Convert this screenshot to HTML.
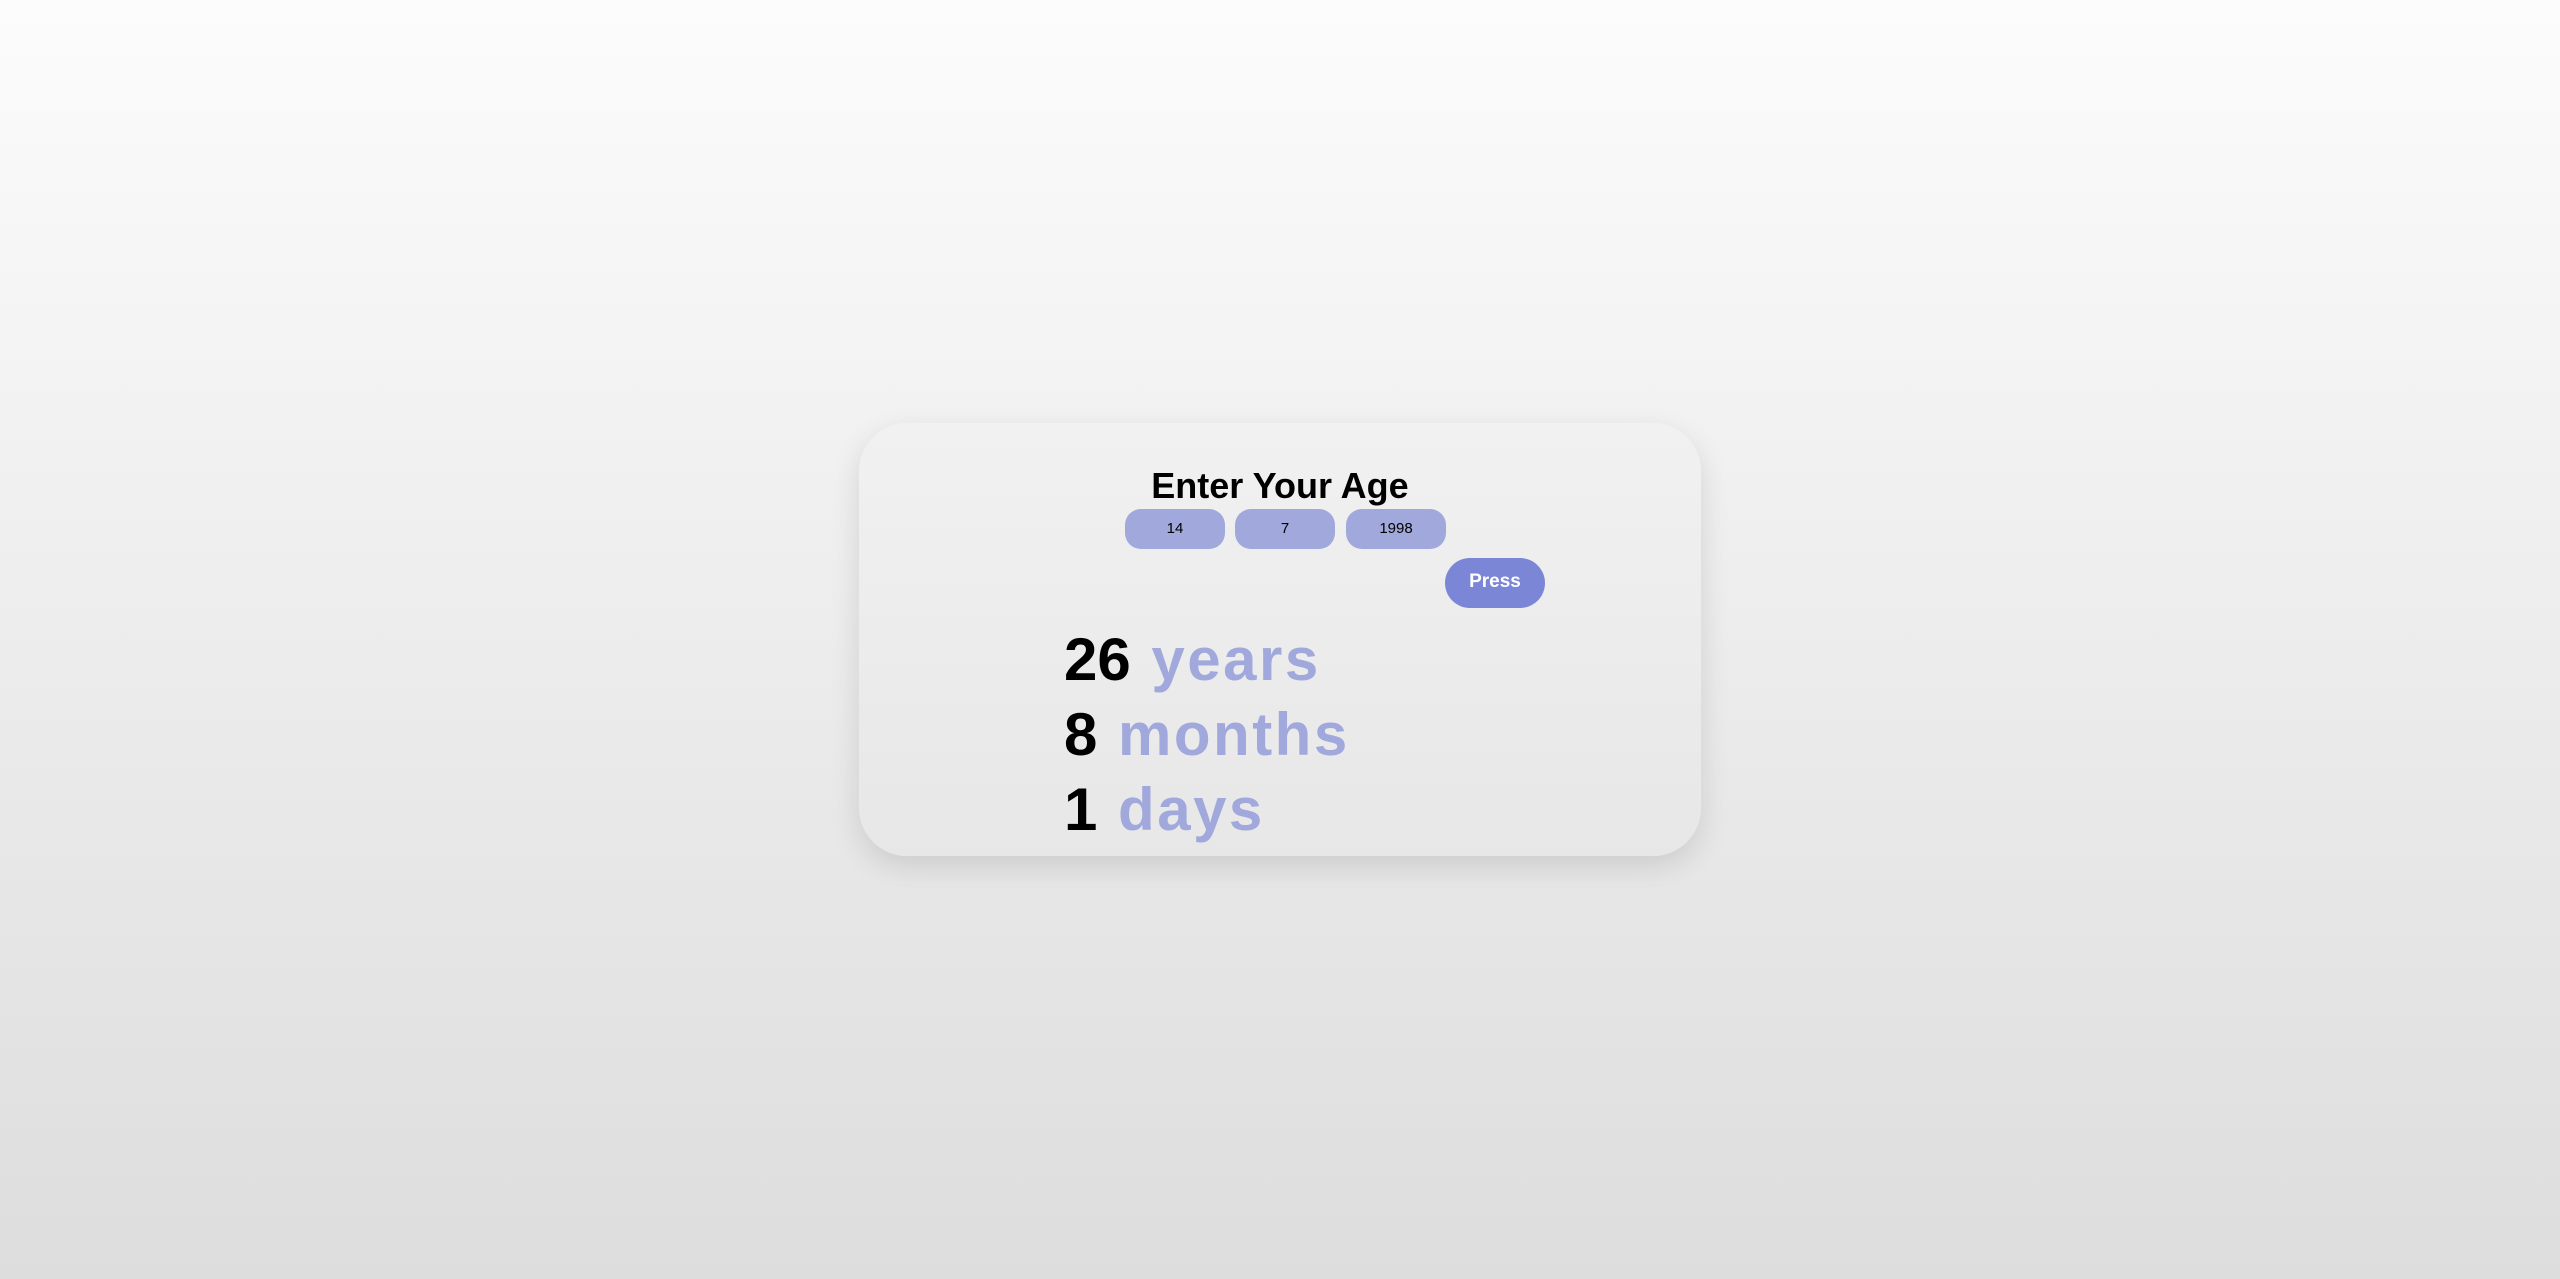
<!DOCTYPE html>
<html><head><meta charset="utf-8"><style>
html,body{margin:0;padding:0;width:2560px;height:1279px;overflow:hidden;}
body{background:linear-gradient(#fcfcfc,#dddddd);font-family:"Liberation Sans",sans-serif;position:relative;}
.card{position:absolute;left:859px;top:423px;width:842px;height:433px;border-radius:48px;background:linear-gradient(#f1f1f1,#e7e7e7);box-shadow:0 10px 30px rgba(0,0,0,0.12);}
.title{position:absolute;left:0;width:2560px;top:464px;text-align:center;font-weight:bold;font-size:36px;color:#000;line-height:44px;}
.inp{position:absolute;top:509px;width:100px;height:40px;border-radius:16px;background:#a0a8dc;text-align:center;line-height:40px;font-family:"Liberation Sans Narrow","Liberation Sans",sans-serif;font-size:15px;color:#000;}
.btn{position:absolute;left:1445px;top:558px;width:100px;height:50px;border-radius:25px;background:#7b86d6;color:#fff;font-weight:bold;font-size:19px;text-align:center;line-height:48px;}
.line{position:absolute;left:1064px;font-size:60px;font-weight:bold;line-height:75px;white-space:nowrap;}
.line span{color:#a0a8dc;letter-spacing:2.5px;margin-left:4px;}
</style></head><body>
<div class="card"></div>
<div class="title">Enter Your Age</div>
<div class="inp" style="left:1125px">14</div>
<div class="inp" style="left:1235px">7</div>
<div class="inp" style="left:1346px">1998</div>
<div class="btn">Press</div>
<div class="line" style="top:622px">26 <span>years</span></div>
<div class="line" style="top:697px">8 <span>months</span></div>
<div class="line" style="top:772px">1 <span>days</span></div>
</body></html>
